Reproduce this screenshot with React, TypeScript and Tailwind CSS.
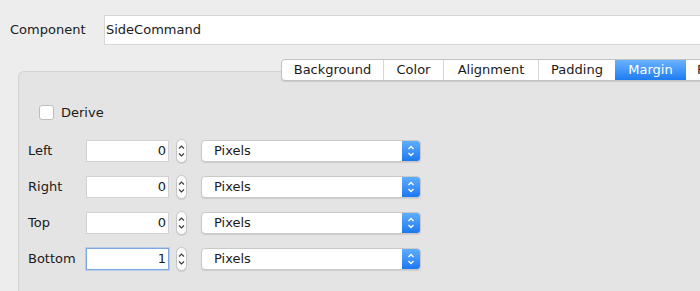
import React from 'react';

const tabs = [
  { label: 'Background', w: 'w-[101px]' },
  { label: 'Color', w: 'w-[60px]' },
  { label: 'Alignment', w: 'w-[95px]' },
  { label: 'Padding', w: 'w-[77px]' },
  { label: 'Margin', w: 'w-[71px]', active: true },
  { label: 'Position', w: 'w-[80px]' },
];

const rows = [
  { label: 'Left', value: '0' },
  { label: 'Right', value: '0' },
  { label: 'Top', value: '0' },
  { label: 'Bottom', value: '1', focused: true },
];

function Stepper() {
  return (
    <div className="ml-[7px] flex h-[24px] w-[11px] shrink-0 items-center justify-center rounded-[6px] border border-[#c4c4c4] bg-[#fbfbfb] shadow-[0_1px_0_rgba(0,0,0,0.08)]">
      <svg width="7" height="16" viewBox="0 0 7 16" fill="none" stroke="#3a3a3a" strokeWidth="1.1">
        <path d="M1 5.5 L3.5 3 L6 5.5" />
        <path d="M1 10.5 L3.5 13 L6 10.5" />
      </svg>
    </div>
  );
}

function Select() {
  return (
    <div className="ml-[14px] flex h-[22px] w-[220px] shrink-0 overflow-hidden rounded-[4px] border border-[#c8c8c8] bg-white shadow-[0_1px_1px_rgba(0,0,0,0.1)]">
      <div className="flex-1 pl-[12px] text-[13px] leading-[20px] text-[#1a1a1a]">Pixels</div>
      <div className="flex w-[18px] items-center justify-center bg-gradient-to-b from-[#5fadfb] to-[#1a78f2]">
        <svg width="8" height="14" viewBox="0 0 8 14" fill="none" stroke="white" strokeWidth="1.3">
          <path d="M1.5 5 L4 2.5 L6.5 5" />
          <path d="M1.5 9 L4 11.5 L6.5 9" />
        </svg>
      </div>
    </div>
  );
}

export default function App() {
  return (
    <div
      className="h-[291px] w-[700px] overflow-hidden bg-[#ededed] text-[#1a1a1a]"
      style={{ fontFamily: '"DejaVu Sans", "Liberation Sans", sans-serif' }}
    >
      <div className="flex items-center pl-[10px] pt-[15px]">
        <div className="w-[94px] shrink-0 text-[13px]">Component</div>
        <div className="h-[30px] w-[620px] shrink-0 border border-[#d6d6d6] bg-white pl-[1px] text-[13px] leading-[28px]">
          SideCommand
        </div>
      </div>

      <div className="mt-[26px] pl-[18px]">
        <div className="h-[220px] rounded-tl-[6px] border-l border-t border-[#d4d4d4] bg-[#e4e4e4]">
          <div className="-mt-[13px] ml-[262px] flex h-[22px] w-fit rounded-[4px] border border-[#c3c3c3] bg-white shadow-[0_1px_1px_rgba(0,0,0,0.12)]">
            {tabs.map((t, i) => (
              <div
                key={t.label}
                className={
                  t.active
                    ? `${t.w} shrink-0 bg-gradient-to-b from-[#69b1fb] to-[#1b7cf4] text-center text-[13px] leading-[20px] text-white`
                    : i === 0
                      ? `${t.w} shrink-0 rounded-l-[4px] text-center text-[13px] leading-[20px]`
                      : i === tabs.length - 1
                        ? `${t.w} shrink-0 pl-[11px] text-[13px] leading-[20px]`
                        : `${t.w} shrink-0 border-l border-[#d6d6d6] text-center text-[13px] leading-[20px]`
                }
              >
                {t.label}
              </div>
            ))}
          </div>

          <div className="ml-[20px] mt-[22px] flex items-center">
            <div className="h-[15px] w-[15px] rounded-[3px] border border-[#bdbdbd] bg-white" />
            <div className="ml-[7px] text-[13px]">Derive</div>
          </div>

          <div className="mt-[16px] flex flex-col gap-[12px] pl-[9px]">
            {rows.map((r) => (
              <div key={r.label} className="flex items-center">
                <div className="w-[58px] shrink-0 text-[13px]">{r.label}</div>
                <div
                  className={
                    r.focused
                      ? 'h-[22px] w-[83px] shrink-0 border border-[#7fa8e0] bg-white pr-[2px] text-right text-[13px] leading-[20px] shadow-[0_0_0_1px_rgba(140,180,235,0.5)]'
                      : 'h-[22px] w-[83px] shrink-0 border border-[#d2d2d2] bg-white pr-[2px] text-right text-[13px] leading-[20px]'
                  }
                >
                  {r.value}
                </div>
                <Stepper />
                <Select />
              </div>
            ))}
          </div>
        </div>
      </div>
    </div>
  );
}
